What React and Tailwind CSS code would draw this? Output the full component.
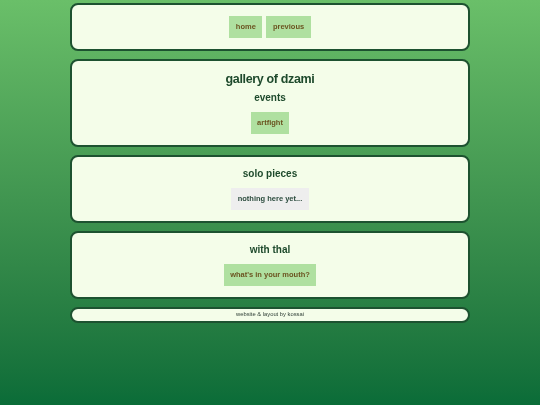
export default function App() {
  const card = "rounded-[8px] border-2 border-[#1d5230] bg-[#f4fde9] flex flex-col items-center";
  const btn = "h-[22px] px-[6.5px] flex items-center bg-[#afe0a0] text-[#6b5320] text-[7.5px] font-bold leading-none";
  const h = "text-[10px] leading-[12px] font-bold text-[#1e4a2c]";
  return (
    <div
      className="w-[540px] h-[405px] overflow-hidden pt-[3px]"
      style={{ fontFamily: '"Liberation Sans", Arial, sans-serif' }}
    >
      <div className="fixed inset-0 -z-10 bg-gradient-to-b from-[#6abf69] to-[#0a6c38]" />
      <div className="w-[400px] mx-auto flex flex-col gap-[8px]">
        <div className={card + " py-[11px]"}>
          <div className="flex gap-[4px]">
            <div className={btn}>home</div>
            <div className={btn}>previous</div>
          </div>
        </div>
        <div className={card + " py-[11px]"}>
          <div className="text-[12.5px] leading-[14px] font-bold tracking-[-0.35px] text-[#1e4a2c]">gallery of dzami</div>
          <div className={h + " mt-[6px]"}>events</div>
          <div className={btn + " mt-[8px]"}>artfight</div>
        </div>
        <div className={card + " py-[11px]"}>
          <div className={h}>solo pieces</div>
          <div className="mt-[8px] h-[22px] px-[6.5px] flex items-center bg-[#eeeeee] text-[#2a4a3c] text-[7.5px] font-bold leading-none">nothing here yet...</div>
        </div>
        <div className={card + " py-[11px]"}>
          <div className={h}>with thal</div>
          <div className={btn + " mt-[8px]"}>what's in your mouth?</div>
        </div>
        <div className={card + " h-[16px] justify-center"}>
          <div className="text-[5.8px] leading-none text-[#2f3f36]">website &amp; layout by kossai</div>
        </div>
      </div>
    </div>
  );
}
